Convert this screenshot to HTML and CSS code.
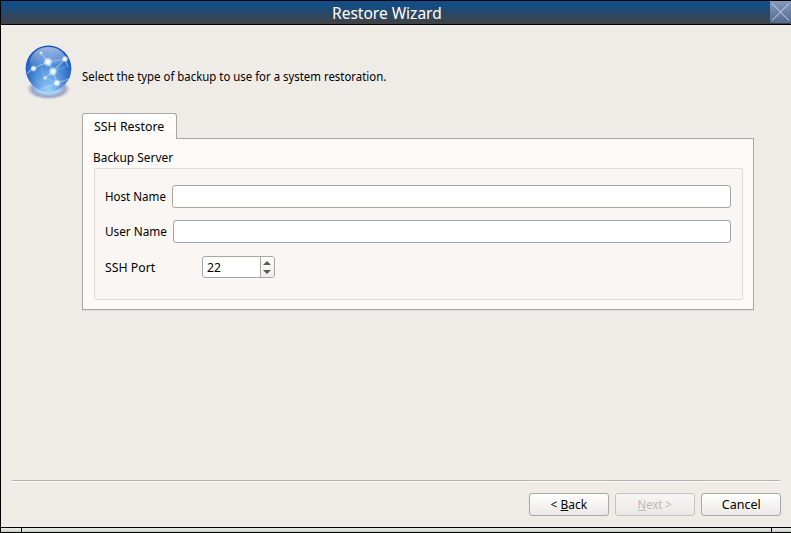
FILE: index.html
```html
<!DOCTYPE html>
<html lang="en">
<head>
<meta charset="utf-8">
<title>Restore Wizard</title>
<link rel="stylesheet" href="styles.css">
</head>
<body>
<div class="window">
  <header class="titlebar">
    <h1 class="title"><span class="t-title">Restore Wizard</span></h1>
    <button class="close" aria-label="Close">
      <svg width="21" height="22" viewBox="0 0 21 22"><path d="M2 2.500l17 17M19 2.500l-17 17" stroke="#dfe2ec" stroke-width=".9" fill="none"/></svg>
    </button>
  </header>
  <main class="body">
    <div class="intro">
      <svg class="globe" width="50" height="56" viewBox="0 0 50 56">
        <defs>
          <radialGradient id="ball" cx=".5" cy=".62" r=".64">
            <stop offset="0" stop-color="#5d9fe4"/><stop offset=".45" stop-color="#4a88d6"/><stop offset=".8" stop-color="#2362c0"/><stop offset="1" stop-color="#0d4cb0"/>
          </radialGradient>
          <radialGradient id="glow" cx=".5" cy="1" r=".5">
            <stop offset="0" stop-color="#a4dcff" stop-opacity=".95"/><stop offset="1" stop-color="#7dbcf5" stop-opacity="0"/>
          </radialGradient>
          <linearGradient id="gloss" x1="0" y1="0" x2="0" y2="1">
            <stop offset="0" stop-color="#fff" stop-opacity=".6"/><stop offset="1" stop-color="#fff" stop-opacity="0"/>
          </linearGradient>
          <radialGradient id="shadow">
            <stop offset="0" stop-color="#b6e8ff"/><stop offset=".45" stop-color="#a9d2f6"/><stop offset=".75" stop-color="#9098be" stop-opacity=".85"/><stop offset="1" stop-color="#9aa5c8" stop-opacity="0"/>
          </radialGradient>
          <radialGradient id="node">
            <stop offset="0" stop-color="#fff"/><stop offset=".4" stop-color="#fff" stop-opacity=".85"/><stop offset="1" stop-color="#fff" stop-opacity="0"/>
          </radialGradient>
        </defs>
        <ellipse cx="24.500" cy="46" rx="22" ry="10.500" fill="url(#shadow)"/>
        <circle cx="24.500" cy="25.500" r="22.900" fill="url(#ball)"/>
        <circle cx="24.500" cy="25.500" r="22.900" fill="url(#glow)"/>
        <path d="M6 17C9 8 16 4 24.500 4S40 8 43 17C34 24 18 20 6 24z" fill="url(#gloss)"/>
        <g stroke="#d9eaff" stroke-opacity=".5" stroke-width="1.100" fill="none">
          <path d="M16 9l8 10 17-3-12 12.500-5-9.500L9 25.500l-6 5M29 28.500l4 11.500 12-4M29 28.500l-8 6.500M33 40l-16 6M41 16l3 8"/>
          <path d="M21 35l-4-10M21 35l12 5M29 28.500l13-5" stroke-opacity=".25"/>
        </g>
        <g fill="url(#node)">
          <circle cx="17" cy="10" r="2" opacity=".7"/><circle cx="24" cy="19" r="5"/><circle cx="41" cy="16" r="3.600"/><circle cx="9.500" cy="25.500" r="3.500"/><circle cx="29" cy="28.500" r="4.700"/><circle cx="33" cy="40" r="3.900"/><circle cx="21" cy="35" r="2.500" opacity=".7"/>
        </g>
      </svg>
      <p class="lead"><span class="t-lead">Select the type of backup to use for a system restoration.</span></p>
    </div>
    <section class="tabs">
      <div class="tab"><span class="t-tab">SSH Restore</span></div>
      <div class="panel">
        <h2 class="group-title"><span class="t-group">Backup Server</span></h2>
        <div class="group">
          <div class="row host"><label><span class="t-host">Host Name</span></label><div class="field"></div></div>
          <div class="row user"><label><span class="t-user">User Name</span></label><div class="field"></div></div>
          <div class="row port"><label><span class="t-port">SSH Port</span></label>
            <div class="spin"><span class="value"><span class="t-value">22</span></span>
              <span class="steps"><svg width="13" height="20" viewBox="0 0 13 20"><path d="M2 8L6 4L10 8zM2 13L6 17L10 13z" fill="#5b5855"/></svg></span>
            </div>
          </div>
        </div>
      </div>
    </section>
    <footer class="actions">
      <button class="btn"><span class="t-back">&lt; <u>B</u>ack</span></button>
      <button class="btn off" disabled><span class="t-next"><u>N</u>ext &gt;</span></button>
      <button class="btn"><span class="t-cancel">Cancel</span></button>
    </footer>
  </main>
  <div class="grip"><i></i><i></i><i></i></div>
</div>
</body>
</html>
```
FILE: styles.css
```css
* { box-sizing: border-box; margin: 0; padding: 0; }
body { width: 791px; height: 533px; overflow: hidden; font: 13px/16px "Noto Sans", sans-serif; color: #000; }
span { white-space: nowrap; }
.window { width: 791px; height: 533px; display: flex; flex-direction: column; background: #efebe7; border: solid #000; border-width: 1px 0 1px 1px; }
.titlebar { height: 24px; display: flex; background: linear-gradient(#0c4f91, #404244); border-bottom: 1px solid #000; }
.title { flex: 1; padding-left: 331px; font-size: 16.500px; font-weight: 400; line-height: 24px; color: #fff; }
.close { width: 21px; height: 22px; border: 0; background: linear-gradient(#849abd, #53698f); }
.close svg { display: block; }
.body { flex: 1; display: flex; flex-direction: column; }
.intro { display: flex; height: 88px; padding: 18px 0 0 23px; }
.globe { flex: none; }
.lead { padding: 26px 0 0 8px; }
.tabs { margin-left: 81px; width: 672px; }
.tab { position: relative; width: 95px; height: 26px; padding: 5px 0 0 11px; border: 1px solid #aaa7a3; border-bottom: 0; border-radius: 3px 3px 0 0; background: linear-gradient(#fff, #fdf9f6); z-index: 1; }
.panel { margin-top: -1px; height: 172px; padding: 11px 10px 0 11px; border: 1px solid #aaa7a3; background: #fdf9f6; box-shadow: 0 1px 0 #e0ddd8; }
.group-title { height: 18px; margin-left: -1px; font-size: 13px; font-weight: 400; line-height: 16px; }
.group { height: 132px; padding: 16px 11px 0 10px; border: 1px solid #dfdcd9; border-radius: 2px; background: #faf6f3; }
.row { display: flex; align-items: center; height: 23px; }
.row + .row { margin-top: 12px; }
.row.port { margin-top: 13px; height: 22px; }
.row label { flex: none; }
.host label { width: 67px; }
.user label { width: 68px; }
.port label { width: 97px; padding-top: 1px; }
.field { flex: 1; height: 23px; border: 1px solid #aaa7a3; border-radius: 3px; background: #fff; }
.spin { width: 73px; height: 22px; display: flex; border: 1px solid #aaa7a3; border-radius: 3px; background: #fff; overflow: hidden; }
.value { flex: 1; padding: 3px 0 0 4px; }
.steps { width: 14px; border-left: 1px solid #aaa7a3; background: linear-gradient(#fff, #eeebe8); }
.steps svg { display: block; }
.actions { margin: auto 10px 11px 11px; padding-top: 12px; border-top: 1px solid #b5b1ad; box-shadow: inset 0 1px 0 #fff; display: flex; gap: 6px; justify-content: flex-end; width: 768px; }
.btn { width: 80px; height: 23px; border: 1px solid #aaa7a3; border-radius: 3px; background: linear-gradient(#fff, #ebe9e7); font: inherit; color: #000; }
.btn:last-child { margin-right: -1px; }
.btn.off { color: #bcb9b6; border-color: #c6c2bf; background: linear-gradient(#f8f6f4, #ebe8e5); }
u { text-underline-offset: 1px; }
.grip { height: 5px; display: flex; gap: 1px; border-top: 1px solid #000; background: #000; }
.grip i { width: 20px; background: linear-gradient(#eceeea, #c9cdc7); }
.grip i:nth-child(2) { flex: 1; }
.grip i:last-child { width: 19px; }

/* Condensed lettering, raised one pixel onto the widget baseline */
[class^="t-"] { display: inline-block; transform-origin: left center; transform: translateY(-1px) scaleX(var(--narrow)); }
.t-title { --narrow: .94; transform: scaleX(var(--narrow)); }
.t-lead { --narrow: .877; }
.t-tab { --narrow: .95; }
.t-group { --narrow: .915; }
.t-host { --narrow: .89; }
.t-user { --narrow: .905; }
.t-port { --narrow: .945; }
.t-value { --narrow: .94; }
.btn span { transform-origin: center; }
.t-back { --narrow: .92; }
.t-next { --narrow: .87; }
.t-cancel { --narrow: .96; }
```
